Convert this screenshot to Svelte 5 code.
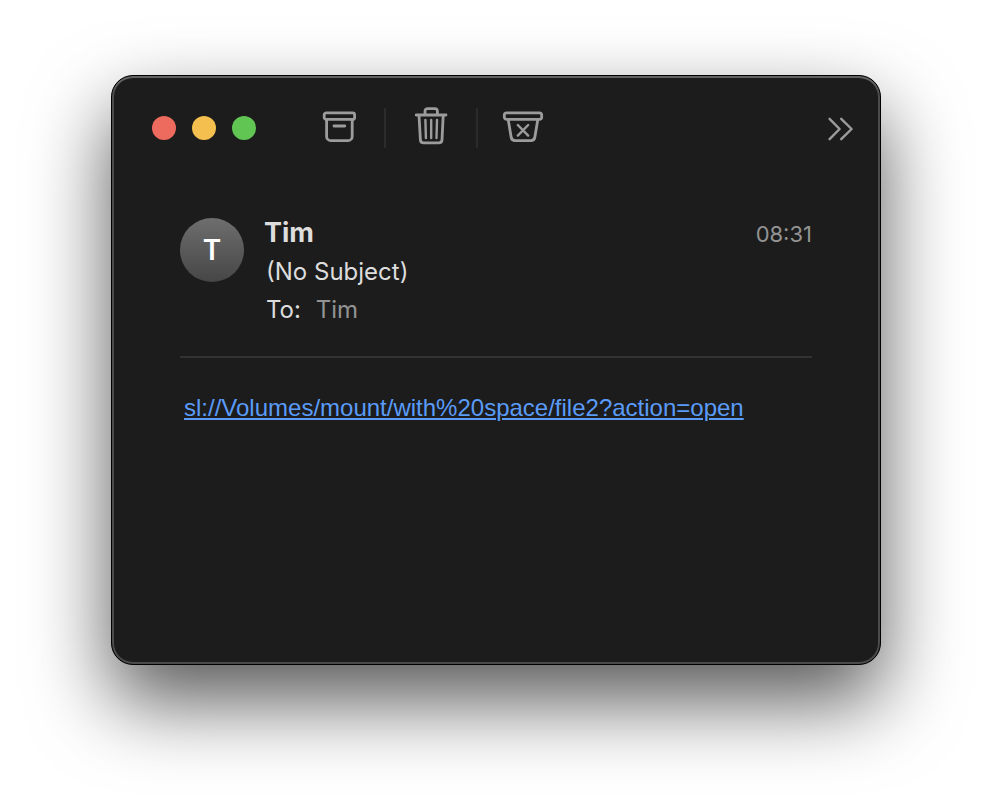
<script>
  const message = {
    sender: 'Tim',
    subject: '(No Subject)',
    to: 'Tim',
    time: '08:31',
    link: 'sl://Volumes/mount/with%20space/file2?action=open'
  };
</script>

<main class="desktop">
  <article class="window">
    <header class="toolbar">
      <div class="lights">
        <button class="light close" aria-label="Close"></button>
        <button class="light minimize" aria-label="Minimize"></button>
        <button class="light zoom" aria-label="Zoom"></button>
      </div>
      <div class="actions">
        <button class="action" aria-label="Archive">
          <svg viewBox="0 0 40 40" width="40" height="40">
            <rect x="5.2" y="4.8" width="30.4" height="6.6" rx="2" />
            <path d="M7.6 11.6V28.4a4.2 4.2 0 0 0 4.2 4.2H29a4.2 4.2 0 0 0 4.2-4.2V11.6M15 18h10.8" />
          </svg>
        </button>
        <button class="action" aria-label="Delete">
          <svg viewBox="0 0 40 40" width="40" height="40">
            <path d="M5.2 7H35M14 7V3.2A2.6 2.6 0 0 1 16.6.6h7.2a2.6 2.6 0 0 1 2.6 2.6V7" />
            <path d="M8 7.4 9.4 31.8a3.2 3.2 0 0 0 3.2 3h15.2a3.2 3.2 0 0 0 3.2-3L32.2 7.4" />
            <path class="thin" d="M14.4 12 14.9 30M20.2 12V30M26 12 25.5 30" />
          </svg>
        </button>
        <button class="action" aria-label="Move to Junk">
          <svg viewBox="0 0 40 40" width="40" height="40">
            <rect x="1.3" y="4.8" width="37.4" height="6.6" rx="2.4" />
            <path d="M5.2 11.6 8.2 29.4a4 4 0 0 0 4 3.2h15.6a4 4 0 0 0 4-3.2L34.8 11.6" />
            <path class="thin" d="M14.8 17 25.2 27.6M25.2 17 14.8 27.6" />
          </svg>
        </button>
      </div>
      <button class="more" aria-label="More toolbar items">
        <svg viewBox="0 0 26 24" width="26" height="24">
          <path class="thin" d="M1.6 2.8 11.6 13 1.6 23.2M13.2 2.8 23.6 13 13.2 23.2" />
        </svg>
      </button>
    </header>

    <section class="message">
      <div class="head">
        <div class="avatar" aria-hidden="true">{message.sender[0]}</div>
        <div class="details">
          <h1>{message.sender}</h1>
          <p class="line">{message.subject}</p>
          <p class="line">To: <span class="recipient">{message.to}</span></p>
        </div>
        <time datetime={message.time}>{message.time}</time>
      </div>
      <p class="body"><a href={message.link}>{message.link}</a></p>
    </section>
  </article>
</main>

<style>
  :global(body) {
    margin: 0;
    background: #fff;
  }

  .desktop {
    box-sizing: border-box;
    display: flex;
    min-height: 100vh;
    padding: 75px 111px 147px;
    overflow: hidden;
    font-family: Inter, "Liberation Sans", sans-serif;
  }

  .window {
    flex: 1;
    min-width: 0;
    border: 1px solid #000;
    border-radius: 22px;
    background: #1c1c1c;
    box-shadow:
      inset 0 2px 0 #626262,
      inset 0 0 0 2px #4b4b4b,
      0 36px 80px rgba(0, 0, 0, 0.66);
  }

  button {
    padding: 0;
    border: 0;
    background: none;
  }

  .toolbar {
    display: flex;
    align-items: center;
    height: 104px;
    padding: 0 26px 0 40px;
  }

  .lights {
    display: flex;
    gap: 16px;
    margin-right: 38px;
  }

  .light {
    width: 24px;
    height: 24px;
    border-radius: 50%;
  }

  .close {
    background: #ed6a5e;
  }

  .minimize {
    background: #f5bf4f;
  }

  .zoom {
    background: #61c554;
  }

  .actions {
    display: flex;
  }

  .action {
    display: flex;
    justify-content: center;
    width: 90px;
    height: 40px;
  }

  .action + .action {
    width: 92px;
    border-left: 2px solid #2b2b2b;
  }

  .more {
    display: flex;
    margin-left: auto;
  }

  svg {
    overflow: visible;
    fill: none;
    stroke: #9c9c9c;
    stroke-width: 2.8;
    stroke-linecap: round;
    stroke-linejoin: round;
  }

  .thin {
    stroke-width: 2.4;
  }

  .message {
    padding: 32px 68px;
    color: #dddddd;
  }

  .head {
    display: flex;
    align-items: flex-start;
    padding-bottom: 27px;
    border-bottom: 2px solid #323232;
  }

  .avatar {
    display: flex;
    align-items: center;
    justify-content: center;
    width: 64px;
    height: 64px;
    margin: 6px 20px 0 0;
    border-radius: 50%;
    background: linear-gradient(#6e6e6e, #464646);
    color: #fff;
    font-size: 28px;
    font-weight: 600;
  }

  .details {
    flex: 1;
  }

  h1 {
    margin: 0;
    font-size: 27px;
    font-weight: 700;
    line-height: 41px;
  }

  .line {
    margin: 0 0 0 2px;
    font-size: 24px;
    line-height: 38px;
  }

  .recipient {
    margin-left: 8px;
    color: #939393;
  }

  time {
    color: #939393;
    font-size: 22px;
    line-height: 45px;
  }

  .body {
    margin: 36px 4px;
    font-family: "Liberation Sans", Arial, sans-serif;
    font-size: 24px;
    line-height: 28px;
    overflow-wrap: anywhere;
  }

  a {
    color: #5a9bf8;
    text-decoration-thickness: 2px;
    text-underline-offset: 2px;
  }
</style>
